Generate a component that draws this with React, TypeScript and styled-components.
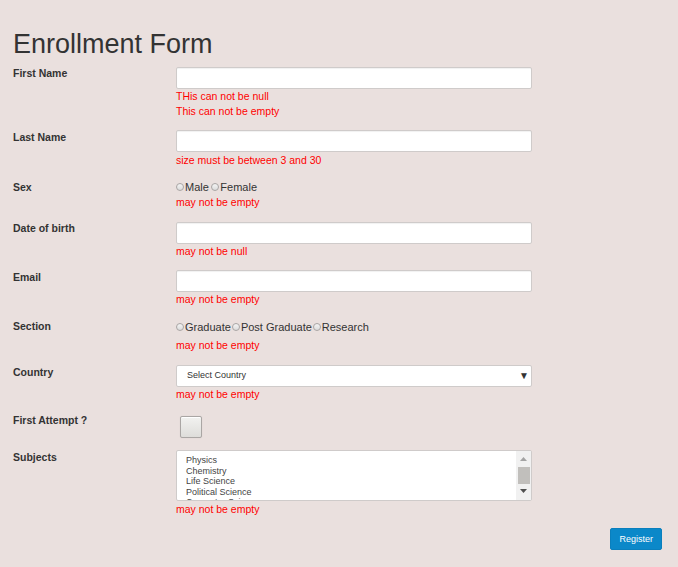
import React from "react";
import styled, { createGlobalStyle } from "styled-components";

const GlobalStyle = createGlobalStyle`
  html, body {
    margin: 0;
    padding: 0;
    background: #eae0de;
  }
  body {
    font-family: "Liberation Sans", Arial, Helvetica, sans-serif;
    color: #333;
    font-size: 10.5px;
    line-height: 15px;
  }
  * { box-sizing: border-box; }
`;

const Page = styled.div`
  padding: 29px 16px 18px 13px;
  min-height: 567px;
`;

const Title = styled.h1`
  margin: 0 0 7.5px;
  font-size: 27px;
  line-height: 30px;
  font-weight: 400;
  color: #333;
`;

const Form = styled.form`
  width: 649px;
  display: flex;
  flex-direction: column;
`;

const Group = styled.div`
  display: grid;
  grid-template-columns: 163px 356px;
  align-items: start;
  margin-bottom: 11.25px;
`;

const Label = styled.label<{ $offset?: number }>`
  font-weight: 700;
  font-size: 10.5px;
  line-height: 15px;
  color: #333;
  margin-top: ${(p) => p.$offset ?? 0}px;
`;

const Field = styled.div`
  display: flex;
  flex-direction: column;
`;

const TextInput = styled.input`
  display: block;
  width: 356px;
  height: 22px;
  margin: 0;
  padding: 3px 8px;
  border: 1px solid #cfcbca;
  border-radius: 2px;
  background: #fff;
  box-shadow: inset 0 1px 1px rgba(0, 0, 0, 0.06);
  font: inherit;
  outline: none;
`;

const ErrorText = styled.span<{ $shift?: number; $after?: number }>`
  display: block;
  color: #ff0000;
  font-size: 10.5px;
  line-height: 15px;
  margin-top: ${(p) => p.$shift ?? 0}px;
  margin-bottom: ${(p) => p.$after ?? 0}px;
`;

const RadioRow = styled.div<{ $top: number; $bottom: number }>`
  display: flex;
  align-items: center;
  height: 15px;
  margin-top: ${(p) => p.$top}px;
  margin-bottom: ${(p) => p.$bottom}px;
  box-sizing: content-box;
`;

const RadioOption = styled.label<{ $spacing: number }>`
  display: inline-flex;
  align-items: center;
  margin-right: ${(p) => p.$spacing}px;
  font-size: 11px;
  line-height: 15px;
  color: #333;
`;

const Radio = styled.input`
  appearance: none;
  -webkit-appearance: none;
  width: 8px;
  height: 8px;
  margin: 0 1px 0 0;
  border: 1px solid #a9a5a4;
  border-radius: 50%;
  background: linear-gradient(#f4f4f4, #dcdcdc);
  position: relative;
  top: -0.5px;
`;

const SelectBox = styled.div`
  display: flex;
  align-items: center;
  justify-content: space-between;
  width: 356px;
  height: 22px;
  margin-top: 0.5px;
  padding: 0 1px 0 10px;
  border: 1px solid #cfcbca;
  border-radius: 2px;
  background: #fff;
  font-size: 9px;
  color: #333;
`;

const SelectArrow = styled.span`
  font-size: 10px;
  line-height: 10px;
  color: #333;
  padding-right: 1px;
`;

const CheckWrap = styled.div`
  padding: 3px 0 0.5px 4px;
  height: 25.5px;
  box-sizing: border-box;
`;

const CheckBox = styled.div`
  width: 22px;
  height: 22px;
  border: 1px solid #aaa6a4;
  border-radius: 2px;
  background: linear-gradient(#f2f2f0, #deddda);
  box-shadow: inset 0 1px 0 #fff, 0 0 1px rgba(0, 0, 0, 0.15);
`;

const ListBox = styled.div`
  display: flex;
  width: 356px;
  height: 51.5px;
  border: 1px solid #cfcbca;
  border-radius: 2px;
  background: #fff;
  overflow: hidden;
`;

const Options = styled.div`
  flex: 1;
  padding: 4.5px 0 0 9px;
  overflow: hidden;
`;

const Option = styled.div`
  font-size: 9px;
  line-height: 10.5px;
  color: #444;
  white-space: nowrap;
`;

const ScrollTrack = styled.div`
  width: 15px;
  background: #f1f1f1;
  display: flex;
  flex-direction: column;
  align-items: center;
  padding: 6px 0 6px;
`;

const ScrollArrow = styled.svg`
  display: block;
  width: 7px;
  height: 4px;
`;

const ScrollThumb = styled.div`
  width: 12px;
  height: 17px;
  margin: 6px 0 5px;
  background: #c1bfbc;
`;

const Actions = styled.div`
  display: flex;
  justify-content: flex-end;
`;

const Button = styled.button`
  height: 22px;
  padding: 0 8px;
  border: 1px solid #0a7fbd;
  border-radius: 2px;
  background: #0b88c9;
  color: #fff;
  font-family: "Liberation Sans", Arial, sans-serif;
  font-size: 9px;
  line-height: 20px;
  cursor: pointer;
`;

export default function App() {
  return (
    <>
      <GlobalStyle />
      <Page>
        <Title>Enrollment Form</Title>
        <Form onSubmit={(e) => e.preventDefault()}>
          <Group>
            <Label $offset={-1}>First Name</Label>
            <Field>
              <TextInput type="text" />
              <ErrorText>THis can not be null</ErrorText>
              <ErrorText>This can not be empty</ErrorText>
            </Field>
          </Group>

          <Group>
            <Label $offset={0}>Last Name</Label>
            <Field>
              <TextInput type="text" />
              <ErrorText $shift={1} $after={-1}>
                size must be between 3 and 30
              </ErrorText>
            </Field>
          </Group>

          <Group>
            <Label $offset={1.5}>Sex</Label>
            <Field>
              <RadioRow $top={1.5} $bottom={0}>
                <RadioOption $spacing={2.5}>
                  <Radio type="radio" name="sex" />
                  Male
                </RadioOption>
                <RadioOption $spacing={0}>
                  <Radio type="radio" name="sex" />
                  Female
                </RadioOption>
              </RadioRow>
              <ErrorText $after={1}>may not be empty</ErrorText>
            </Field>
          </Group>

          <Group>
            <Label $offset={-1}>Date of birth</Label>
            <Field>
              <TextInput type="text" />
              <ErrorText>may not be null</ErrorText>
            </Field>
          </Group>

          <Group>
            <Label $offset={0}>Email</Label>
            <Field>
              <TextInput type="text" />
              <ErrorText>may not be empty</ErrorText>
            </Field>
          </Group>

          <Group>
            <Label $offset={0.5}>Section</Label>
            <Field>
              <RadioRow $top={1.5} $bottom={3.25}>
                <RadioOption $spacing={1}>
                  <Radio type="radio" name="section" />
                  Graduate
                </RadioOption>
                <RadioOption $spacing={1}>
                  <Radio type="radio" name="section" />
                  Post Graduate
                </RadioOption>
                <RadioOption $spacing={0}>
                  <Radio type="radio" name="section" />
                  Research
                </RadioOption>
              </RadioRow>
              <ErrorText>may not be empty</ErrorText>
            </Field>
          </Group>

          <Group>
            <Label $offset={1}>Country</Label>
            <Field>
              <SelectBox>
                <span>Select Country</span>
                <SelectArrow>▼</SelectArrow>
              </SelectBox>
              <ErrorText $shift={0.5} $after={-0.5}>
                may not be empty
              </ErrorText>
            </Field>
          </Group>

          <Group>
            <Label $offset={0}>First Attempt ?</Label>
            <Field>
              <CheckWrap>
                <CheckBox />
              </CheckWrap>
            </Field>
          </Group>

          <Group>
            <Label $offset={0}>Subjects</Label>
            <Field>
              <ListBox>
                <Options>
                  <Option>Physics</Option>
                  <Option>Chemistry</Option>
                  <Option>Life Science</Option>
                  <Option>Political Science</Option>
                  <Option>Computer Science</Option>
                  <Option>Mathematics</Option>
                </Options>
                <ScrollTrack>
                  <ScrollArrow viewBox="0 0 7 4">
                    <path d="M0 4 L3.5 0 L7 4 Z" fill="#a3a3a3" />
                  </ScrollArrow>
                  <ScrollThumb />
                  <ScrollArrow viewBox="0 0 7 4">
                    <path d="M0 0 L7 0 L3.5 4 Z" fill="#505050" />
                  </ScrollArrow>
                </ScrollTrack>
              </ListBox>
              <ErrorText $shift={1} $after={-1}>
                may not be empty
              </ErrorText>
            </Field>
          </Group>

          <Actions>
            <Button type="submit">Register</Button>
          </Actions>
        </Form>
      </Page>
    </>
  );
}
